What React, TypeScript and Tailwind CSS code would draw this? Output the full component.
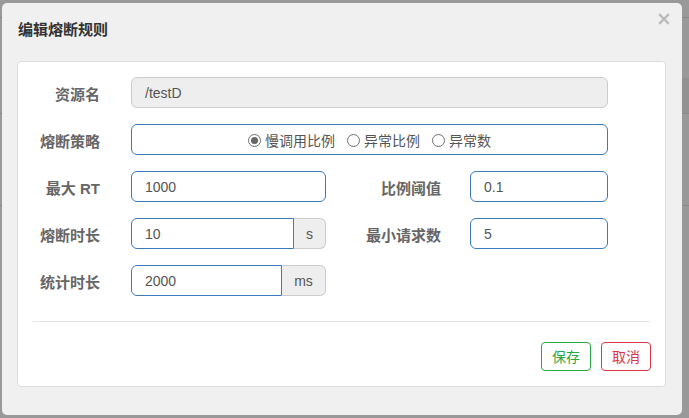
import React from "react";

const FONT = "font-['Liberation_Sans','Noto_Sans_CJK_SC',sans-serif]";

function Label({ children, w }: { children: React.ReactNode; w: string }) {
  return (
    <div className={`${w} shrink-0 pt-[3px] text-right text-[15px] font-bold text-[#666] leading-[31px]`}>
      {children}
    </div>
  );
}

function Input({ value, w, disabled }: { value: string; w: string; disabled?: boolean }) {
  return (
    <div
      className={`${w} h-[31px] shrink-0 rounded-[6px] border pl-[13px] pt-[2px] text-[14px] leading-[27px] text-[#555] ${
        disabled ? "border-[#ccc] bg-[#eee]" : "border-[#3a7bbd] bg-white"
      }`}
    >
      {value}
    </div>
  );
}

function AddonInput({ value, inputW, addon, addonW }: { value: string; inputW: string; addon: string; addonW: string }) {
  return (
    <div className="flex h-[31px] shrink-0">
      <div className={`${inputW} h-[31px] rounded-l-[6px] border border-[#3a7bbd] bg-white pl-[13px] pt-[2px] text-[14px] leading-[27px] text-[#555]`}>
        {value}
      </div>
      <div className={`${addonW} h-[31px] rounded-r-[6px] border border-l-0 border-[#ccc] bg-[#eee] pt-[2px] text-center text-[14px] leading-[27px] text-[#555]`}>
        {addon}
      </div>
    </div>
  );
}

function Radio({ label, checked }: { label: string; checked?: boolean }) {
  return (
    <div className="flex items-center">
      <span className="flex h-[13px] w-[13px] items-center justify-center rounded-full border border-[#6f6f6f] bg-white">
        {checked && <span className="h-[7px] w-[7px] rounded-full bg-[#666]" />}
      </span>
      <span className="ml-[4px] pt-[2px] text-[14px] text-[#555]">{label}</span>
    </div>
  );
}

export default function App() {
  return (
    <div className={`relative h-[418px] w-[689px] overflow-hidden bg-[#999] ${FONT}`}>
      {/* backdrop page */}
      <div className="h-[17px]" />
      <div className="h-px bg-[#8a8a8a]" />
      <div className="h-[60px]" />
      <div className="flex h-[35px] justify-end">
        <div className="w-[7px] bg-[#929292]" />
      </div>
      <div className="h-px bg-[#8a8a8a]" />
      <div className="h-[91px]" />
      <div className="h-px bg-[#8a8a8a]" />

      {/* modal */}
      <div className="absolute left-[2px] top-[3px] flex h-[412px] w-[680px] flex-col rounded-[5px] bg-[#f0f0f0]">
        <div className="relative flex h-[58px] shrink-0 items-center pb-[4px] pl-[16px]">
          <span className="text-[15px] font-bold text-[#333]">编辑熔断规则</span>
          <svg
            className="absolute left-[656px] top-[10px]"
            width="12"
            height="12"
            viewBox="0 0 12 12"
          >
            <path d="M1.2 1.2 L10.8 10.8 M10.8 1.2 L1.2 10.8" stroke="#bbb" strokeWidth="2.4" strokeLinecap="butt" />
          </svg>
        </div>

        <div className="ml-[15px] flex h-[326px] w-[649px] flex-col rounded-[4px] border border-[#ddd] bg-white pt-[15px]">
          {/* row 1 */}
          <div className="flex h-[31px] items-center">
            <Label w="w-[82px]">资源名</Label>
            <div className="ml-[31px]">
              <Input value="/testD" w="w-[477px]" disabled />
            </div>
          </div>
          {/* row 2 */}
          <div className="mt-[16px] flex h-[31px] items-center">
            <Label w="w-[82px]">熔断策略</Label>
            <div className="ml-[31px] flex h-[31px] w-[477px] items-center justify-center gap-[12px] rounded-[6px] border border-[#3a7bbd] bg-white pt-[2px]">
              <Radio label="慢调用比例" checked />
              <Radio label="异常比例" />
              <Radio label="异常数" />
            </div>
          </div>
          {/* row 3 */}
          <div className="mt-[16px] flex h-[31px] items-center">
            <Label w="w-[82px]">最大 RT</Label>
            <div className="ml-[31px]">
              <Input value="1000" w="w-[195px]" />
            </div>
            <Label w="w-[115px]">比例阈值</Label>
            <div className="ml-[29px]">
              <Input value="0.1" w="w-[138px]" />
            </div>
          </div>
          {/* row 4 */}
          <div className="mt-[16px] flex h-[31px] items-center">
            <Label w="w-[82px]">熔断时长</Label>
            <div className="ml-[31px]">
              <AddonInput value="10" inputW="w-[163px]" addon="s" addonW="w-[32px]" />
            </div>
            <Label w="w-[115px]">最小请求数</Label>
            <div className="ml-[29px]">
              <Input value="5" w="w-[138px]" />
            </div>
          </div>
          {/* row 5 */}
          <div className="mt-[16px] flex h-[31px] items-center">
            <Label w="w-[82px]">统计时长</Label>
            <div className="ml-[31px]">
              <AddonInput value="2000" inputW="w-[151px]" addon="ms" addonW="w-[44px]" />
            </div>
          </div>

          <div className="ml-[15px] mt-[25px] h-px w-[617px] bg-[#e5e5e5]" />

          <div className="mt-[20px] flex justify-end gap-[10px] pr-[14px]">
            <button className="h-[29px] w-[50px] rounded-[4px] border border-[#28a745] bg-white pt-[1px] text-[14px] text-[#28a745]">
              保存
            </button>
            <button className="h-[29px] w-[50px] rounded-[4px] border border-[#dc3545] bg-white pt-[1px] text-[14px] text-[#dc3545]">
              取消
            </button>
          </div>
        </div>
      </div>
    </div>
  );
}
